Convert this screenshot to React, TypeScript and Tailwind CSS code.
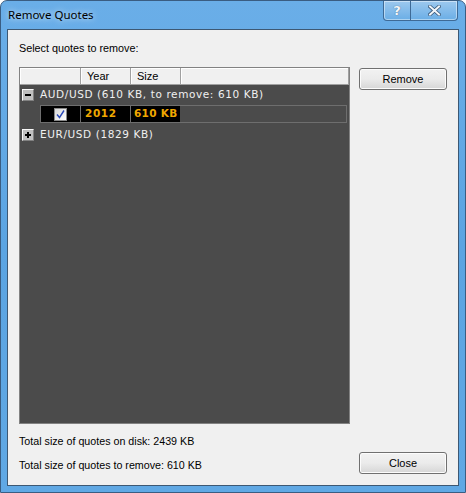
import React from 'react';

function CaptionButtons() {
  return (
    <div className="absolute right-[7px] top-0 flex h-[20px] rounded-b-[4px] border border-t-0 border-[#3e6a96] bg-gradient-to-b from-[#9cc8ee] to-[#6aaee6] shadow-[inset_0_0_0_1px_rgba(255,255,255,0.45)]">
      <div className="flex w-[27px] items-center justify-center border-r border-[#3e6a96] font-['DejaVu_Sans',sans-serif] text-[13px] font-bold text-[#f4f8fc] [text-shadow:0_0_1px_#2b4d70]">
        ?
      </div>
      <div className="flex w-[46px] items-center justify-center">
        <svg width="13" height="11" viewBox="0 0 13 11">
          <path d="M2 1.5 L11 9.5 M11 1.5 L2 9.5" stroke="#3a5878" strokeWidth="3.6" strokeLinecap="square" />
          <path d="M2 1.5 L11 9.5 M11 1.5 L2 9.5" stroke="#f2f6fa" strokeWidth="2" strokeLinecap="square" />
        </svg>
      </div>
    </div>
  );
}

function WinButton({ label }: { label: string }) {
  return (
    <button className="relative h-[22px] w-[88px] rounded-[3px] border border-[#707070] bg-gradient-to-b from-[#f2f2f2] via-[#ebebeb] to-[#d6d6d6] text-[11px] text-black shadow-[inset_0_0_0_1px_#fcfcfc]">
      {label}
    </button>
  );
}

function TreeBox({ sign }: { sign: '-' | '+' }) {
  return (
    <div className="relative flex h-[12px] w-[12px] items-center justify-center border border-t-[#f8f8f8] border-l-[#f8f8f8] border-r-[#808080] border-b-[#808080] bg-[#c0c0c0]">
      <div className="absolute h-[2px] w-[6px] bg-black" />
      {sign === '+' && <div className="absolute h-[6px] w-[2px] bg-black" />}
    </div>
  );
}

export default function App() {
  return (
    <div className="relative h-[493px] w-[466px] overflow-hidden rounded-t-[7px] border border-[#3a5d82] bg-gradient-to-b from-[#6aaee8] via-[#5ba4e2] to-[#60a8e4] font-['Liberation_Sans',sans-serif]">
      {/* title bar */}
      <div className="flex h-[28px] items-center pl-[7px] pb-[1px] font-['Noto_Sans',sans-serif] text-[11.5px] text-black [text-shadow:0_0_6px_rgba(255,255,255,0.9)]">
        Remove Quotes
      </div>
      <CaptionButtons />

      {/* client area */}
      <div className="mx-[6px] h-[457px] border border-[#3d5873] bg-[#f0f0f0] pl-[11px] pr-[10px] pt-[11px]">
        <div className="h-[14px] text-[10.8px] leading-[14px] text-black">Select quotes to remove:</div>

        <div className="mt-[12px] flex gap-[9px]">
          {/* left column */}
          <div className="flex w-[331px] flex-col">
            {/* list box */}
            <div className="flex h-[357px] flex-col border border-[#828282] bg-[#4b4b4b]">
              <div className="flex h-[17px] shrink-0 bg-[#f0f0f0] text-[11px] text-black">
                <div className="w-[61px] border-b border-r border-[#a0a0a0] shadow-[inset_1px_1px_0_#ffffff]" />
                <div className="w-[50px] border-b border-r border-[#a0a0a0] pl-[6px] leading-[16px] shadow-[inset_1px_1px_0_#ffffff]">Year</div>
                <div className="w-[50px] border-b border-r border-[#a0a0a0] pl-[6px] leading-[16px] shadow-[inset_1px_1px_0_#ffffff]">Size</div>
                <div className="flex-1 border-b border-r border-[#a0a0a0] shadow-[inset_1px_1px_0_#ffffff]" />
              </div>

              <div className="flex flex-col font-['DejaVu_Sans',sans-serif] text-[10.5px] tracking-[0.6px] text-[#f0f0f0]">
                <div className="mt-[2px] flex h-[16px] items-center gap-[6px] pl-[2px]">
                  <TreeBox sign="-" />
                  <span>AUD/USD (610 KB, to remove: 610 KB)</span>
                </div>
                <div className="ml-[20px] mr-[2px] mt-[2px] flex h-[18px] border border-[#6e6e6e]">
                  <div className="flex w-[40px] items-center justify-center border-r border-[#6e6e6e] bg-black">
                    <div className="flex h-[13px] w-[13px] items-center justify-center border border-[#8a8a8a] bg-gradient-to-br from-[#d8d8d8] to-[#ffffff]">
                      <svg width="9" height="9" viewBox="0 0 9 9">
                        <path d="M1 4.5 L3.5 7.5 L8 0.5" fill="none" stroke="#2a49b8" strokeWidth="1.4" />
                      </svg>
                    </div>
                  </div>
                  <div className="flex w-[50px] items-center border-r border-[#6e6e6e] bg-black pl-[4px] font-bold text-[#f0a800]">2012</div>
                  <div className="flex w-[49px] items-center bg-black pl-[3px] font-bold tracking-[0.3px] text-[#f0a800]">610 KB</div>
                  <div className="flex-1" />
                </div>
                <div className="mt-[4px] flex h-[16px] items-center gap-[6px] pl-[2px]">
                  <TreeBox sign="+" />
                  <span>EUR/USD (1829 KB)</span>
                </div>
              </div>
            </div>

            <div className="mt-[10px] h-[14px] text-[10.7px] leading-[14px] text-black">Total size of quotes on disk: 2439 KB</div>
            <div className="mt-[10px] h-[14px] text-[10.7px] leading-[14px] text-black">Total size of quotes to remove: 610 KB</div>
          </div>

          {/* right column */}
          <div className="flex h-[407px] flex-col justify-between pt-[1px]">
            <WinButton label="Remove" />
            <WinButton label="Close" />
          </div>
        </div>
      </div>
    </div>
  );
}
